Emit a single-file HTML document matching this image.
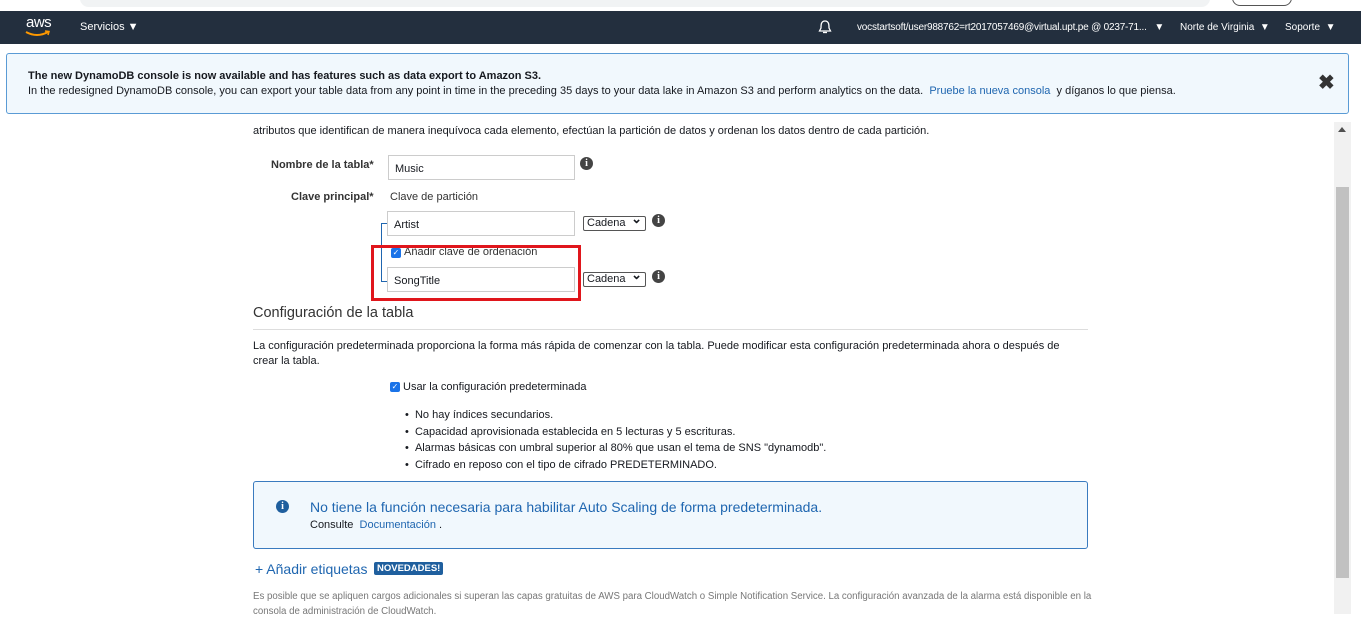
<!DOCTYPE html>
<html><head><meta charset="utf-8"><style>
*{margin:0;padding:0;box-sizing:border-box}
body{width:1361px;height:614px;overflow:hidden;background:#fff;font-family:"Liberation Sans",Arial,sans-serif;color:#16191f;position:relative}
.a{position:absolute;white-space:nowrap}
.s{font-size:11px;letter-spacing:0}
.inp{position:absolute;border:1px solid #ccc;background:#fff;height:25px;font-size:11px;padding:7px 6px}
.sel{position:absolute;height:15px;border:1px solid #555;border-radius:2px;font-size:11px;padding:0 3px;line-height:13px;background:#fff;width:63px}
.sel:after{content:"⌄";position:absolute;right:3px;top:-5px;font-size:13px;font-weight:bold}
.info{position:absolute;width:13px;height:13px;border-radius:50%;background:#444;color:#fff;font-size:10px;font-weight:bold;text-align:center;line-height:13px;font-family:"Liberation Serif",serif}
.cb{position:absolute;width:10px;height:10px;background:#1a73e8;border-radius:2px;color:#fff;font-size:8px;line-height:10px;text-align:center}
</style></head><body>
<div class="a" style="left:0;top:0;width:1361px;height:11px;background:#fff"></div>
<div class="a" style="left:80px;top:-10px;width:1130px;height:17px;background:#f1f3f4;border-radius:9px"></div>
<div class="a" style="left:1232px;top:-10px;width:60px;height:16px;border:1px solid #555;border-radius:8px;background:#fff"></div>
<div class="a" style="left:0;top:11px;width:1361px;height:33px;background:#232f3e"></div>
<div class="a" style="left:26px;top:14px;color:#fff;font-size:15px;letter-spacing:-0.5px">aws</div>
<svg class="a" style="left:25px;top:30px" width="26" height="8"><path d="M1 2 Q12 8 23 2" stroke="#f90" stroke-width="2" fill="none"/><path d="M20 1 L24 1.5 L23 5" stroke="#f90" stroke-width="1.5" fill="none"/></svg>
<div class="a s" style="left:80px;top:21px;color:#fff">Servicios ▼</div>
<svg class="a" style="left:818px;top:20px" width="14" height="15"><path d="M7 1 C3 1 3 5 3 8 L1.5 11 L12.5 11 L11 8 C11 5 11 1 7 1 Z" fill="none" stroke="#fff" stroke-width="1.3"/><path d="M5 12.5 L9 12.5" stroke="#fff" stroke-width="1.3"/></svg>
<div class="a" style="left:857px;top:22px;color:#fff;font-size:10px;letter-spacing:-0.2px">vocstartsoft/user988762=rt2017057469@virtual.upt.pe @ 0237-71... &nbsp;&nbsp;▼</div>
<div class="a" style="left:1180px;top:22px;color:#fff;font-size:10px">Norte de Virginia &nbsp;▼</div>
<div class="a" style="left:1285px;top:22px;color:#fff;font-size:10px">Soporte &nbsp;▼</div>
<div class="a" style="left:6px;top:53px;width:1343px;height:61px;background:#f1f8fd;border:1px solid #5a9bd5;border-radius:3px"></div>
<div class="a s" style="left:28px;top:70px;font-weight:bold">The new DynamoDB console is now available and has features such as data export to Amazon S3.</div>
<div class="a s" style="left:28px;top:85px">In the redesigned DynamoDB console, you can export your table data from any point in time in the preceding 35 days to your data lake in Amazon S3 and perform analytics on the data. &nbsp;<span style="color:#1f66b0">Pruebe la nueva consola</span> &nbsp;y díganos lo que piensa.</div>
<div class="a" style="left:1318px;top:70px;font-size:20px;font-weight:bold;color:#333">✖</div>
<div class="a" style="left:1334px;top:122px;width:17px;height:492px;background:#f1f1f1"></div>
<div class="a" style="left:1336px;top:187px;width:13px;height:391px;background:#c1c1c1"></div>
<div class="a" style="left:1338px;top:127px;width:0;height:0;border:4px solid transparent;border-bottom:5px solid #505050;border-top:0"></div>
<div class="a s" style="left:253px;top:125px">atributos que identifican de manera inequívoca cada elemento, efectúan la partición de datos y ordenan los datos dentro de cada partición.</div>
<div class="a s" style="left:271px;top:159px;font-weight:bold;color:#333">Nombre de la tabla*</div>
<div class="inp" style="left:388px;top:155px;width:187px">Music</div>
<div class="info" style="left:580px;top:157px">i</div>
<div class="a s" style="left:291px;top:191px;font-weight:bold;color:#333">Clave principal*</div>
<div class="a s" style="left:390px;top:191px;color:#333">Clave de partición</div>
<div class="inp" style="left:387px;top:211px;width:188px">Artist</div>
<div class="sel" style="left:583px;top:216px">Cadena</div>
<div class="info" style="left:652px;top:214px">i</div>
<div class="a" style="left:381px;top:223px;width:6px;height:59px;border:1px solid #1f66b0;border-right:0"></div>
<div class="cb" style="left:391px;top:248px">✓</div>
<div class="a s" style="left:404px;top:246px;color:#333">Añadir clave de ordenación</div>
<div class="inp" style="left:387px;top:267px;width:188px">SongTitle</div>
<div class="sel" style="left:583px;top:272px">Cadena</div>
<div class="info" style="left:652px;top:270px">i</div>
<div class="a" style="left:371px;top:245px;width:210px;height:56px;border:3px solid #e0161c"></div>
<div class="a" style="left:253px;top:305px;font-size:14.5px;color:#333">Configuración de la tabla</div>
<div class="a" style="left:253px;top:329px;width:835px;height:1px;background:#ddd"></div>
<div class="a s" style="left:253px;top:339px;line-height:15px;white-space:normal;width:830px">La configuración predeterminada proporciona la forma más rápida de comenzar con la tabla. Puede modificar esta configuración predeterminada ahora o después de crear la tabla.</div>
<div class="cb" style="left:390px;top:382px">✓</div>
<div class="a s" style="left:403px;top:381px">Usar la configuración predeterminada</div>
<div class="a s" style="left:405px;top:407px;line-height:16.5px">• &nbsp;No hay índices secundarios.<br>• &nbsp;Capacidad aprovisionada establecida en 5 lecturas y 5 escrituras.<br>• &nbsp;Alarmas básicas con umbral superior al 80% que usan el tema de SNS "dynamodb".<br>• &nbsp;Cifrado en reposo con el tipo de cifrado PREDETERMINADO.</div>
<div class="a" style="left:253px;top:481px;width:835px;height:68px;background:#f1f8fd;border:1px solid #3a7bbf;border-radius:3px"></div>
<div class="info" style="left:276px;top:500px;background:#1f5f9e">i</div>
<div class="a" style="left:310px;top:499px;font-size:14px;color:#1f66b0">No tiene la función necesaria para habilitar Auto Scaling de forma predeterminada.</div>
<div class="a s" style="left:310px;top:519px">Consulte &nbsp;<span style="color:#1f66b0">Documentación</span> .</div>
<div class="a" style="left:255px;top:561px;font-size:14px;color:#1f66b0">+ Añadir etiquetas</div>
<div class="a" style="left:374px;top:562px;background:#1f5f9e;color:#fff;font-size:9.5px;font-weight:bold;padding:1px 3px;border-radius:2px">NOVEDADES!</div>
<div class="a" style="left:253px;top:589px;font-size:9.7px;color:#777;line-height:15px;white-space:normal;width:850px">Es posible que se apliquen cargos adicionales si superan las capas gratuitas de AWS para CloudWatch o Simple Notification Service. La configuración avanzada de la alarma está disponible en la consola de administración de CloudWatch.</div>
</body></html>
